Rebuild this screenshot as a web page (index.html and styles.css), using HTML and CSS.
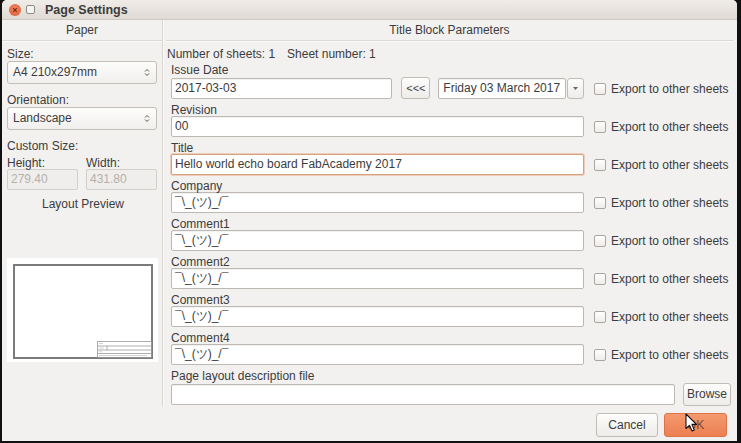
FILE: index.html
```html
<!DOCTYPE html>
<html>
<head>
<meta charset="utf-8">
<link rel="stylesheet" href="styles.css">
</head>
<body>
<div class="window">
  <div class="titlebar">
    <span class="btn-close"><svg width="10" height="10" viewBox="0 0 10 10"><path d="M3.2 3.2 L6.8 6.8 M6.8 3.2 L3.2 6.8" stroke="#7a2a12" stroke-width="1.2"/></svg></span>
    <span class="btn-min"></span>
    <span class="title">Page Settings</span>
  </div>
  <div class="content">
    <div class="left">
      <div class="section-head">Paper</div>
      <div class="lbl l-size">Size:</div>
      <div class="combo">A4 210x297mm<svg class="updown" width="6" height="9" viewBox="0 0 6 9"><path d="M1 3.5 L3 1.5 L5 3.5 M1 5.5 L3 7.5 L5 5.5" fill="none" stroke="#555" stroke-width="1"/></svg></div>
      <div class="lbl l-orient">Orientation:</div>
      <div class="combo">Landscape<svg class="updown" width="6" height="9" viewBox="0 0 6 9"><path d="M1 3.5 L3 1.5 L5 3.5 M1 5.5 L3 7.5 L5 5.5" fill="none" stroke="#555" stroke-width="1"/></svg></div>
      <div class="lbl l-custom">Custom Size:</div>
      <div class="custom-grid">
        <div class="cg-col">
          <div class="lbl">Height:</div>
          <div class="input disabled">279.40</div>
        </div>
        <div class="cg-col">
          <div class="lbl">Width:</div>
          <div class="input disabled">431.80</div>
        </div>
      </div>
      <div class="preview-title">Layout Preview</div>
      <div class="preview">
        <svg width="151" height="104" viewBox="0 0 151 104">
          <rect x="7" y="7" width="138" height="93" fill="#fff" stroke="#7b7b7b" stroke-width="2"/>
          <g stroke="#9a9a9a" stroke-width="0.8" fill="none">
            <rect x="90.5" y="83.5" width="54" height="16"/>
            <line x1="90.5" y1="88" x2="144.5" y2="88"/>
            <line x1="90.5" y1="92" x2="144.5" y2="92"/>
            <line x1="90.5" y1="95.5" x2="144.5" y2="95.5"/>
            <line x1="100" y1="88" x2="100" y2="92"/>
          </g>
          <g stroke="#b8b8b8" stroke-width="0.6">
            <line x1="92" y1="85.5" x2="96" y2="85.5"/>
            <line x1="92" y1="90" x2="97" y2="90"/>
            <line x1="92" y1="93.8" x2="95" y2="93.8"/>
            <line x1="92" y1="97.5" x2="140" y2="97.5"/>
          </g>
        </svg>
      </div>
    </div>
    <div class="right">
      <div class="section-head">Title Block Parameters</div>
      <div class="sheets">Number of sheets: 1<span class="sp"></span>Sheet number: 1</div>
      <div class="fields">
        <div class="row row-date">
          <div class="main">
            <div class="lbl">Issue Date</div>
            <div class="date-line">
              <div class="input date-in">2017-03-03</div>
              <div class="button back">&lt;&lt;&lt;</div>
              <div class="input date-combo">Friday 03 March 2017</div>
              <div class="button drop"><svg width="7" height="5" viewBox="0 0 7 5"><path d="M1 1 L6 1 L3.5 4 Z" fill="#666"/></svg></div>
            </div>
          </div>
          <label class="export"><span class="check"></span>Export to other sheets</label>
        </div>
        <div class="row">
          <div class="main"><div class="lbl">Revision</div><div class="input">00</div></div>
          <label class="export"><span class="check"></span>Export to other sheets</label>
        </div>
        <div class="row">
          <div class="main"><div class="lbl">Title</div><div class="input focus">Hello world echo board FabAcademy 2017</div></div>
          <label class="export"><span class="check"></span>Export to other sheets</label>
        </div>
        <div class="row">
          <div class="main"><div class="lbl">Company</div><div class="input">¯\_(ツ)_/¯</div></div>
          <label class="export"><span class="check"></span>Export to other sheets</label>
        </div>
        <div class="row">
          <div class="main"><div class="lbl">Comment1</div><div class="input">¯\_(ツ)_/¯</div></div>
          <label class="export"><span class="check"></span>Export to other sheets</label>
        </div>
        <div class="row">
          <div class="main"><div class="lbl">Comment2</div><div class="input">¯\_(ツ)_/¯</div></div>
          <label class="export"><span class="check"></span>Export to other sheets</label>
        </div>
        <div class="row">
          <div class="main"><div class="lbl">Comment3</div><div class="input">¯\_(ツ)_/¯</div></div>
          <label class="export"><span class="check"></span>Export to other sheets</label>
        </div>
        <div class="row">
          <div class="main"><div class="lbl">Comment4</div><div class="input">¯\_(ツ)_/¯</div></div>
          <label class="export"><span class="check"></span>Export to other sheets</label>
        </div>
        <div class="row-file">
          <div class="lbl">Page layout description file</div>
          <div class="file-line">
            <div class="input file-in"></div>
            <div class="button browse">Browse</div>
          </div>
        </div>
      </div>
    </div>
  </div>
  <div class="footer">
    <div class="button cancel">Cancel</div>
    <div class="button ok">OK</div>
  </div>
  <svg class="cursor" width="13" height="20" viewBox="0 0 13 20"><path d="M1 1 L1 15.5 L4.5 12.3 L7 18 L9.3 17 L6.9 11.4 L11.5 11.4 Z" fill="#fff" stroke="#111" stroke-width="1.1" stroke-linejoin="round"/></svg>
</div>
</body>
</html>
```

FILE: styles.css
```css
* { box-sizing: border-box; }
html, body { margin: 0; padding: 0; }
body {
  background: #111;
  width: 741px;
  height: 443px;
  overflow: hidden;
  font-family: "Liberation Sans", "DejaVu Sans", sans-serif;
  font-size: 12px;
  color: #3c3c3c;
}
.window {
  position: relative;
  margin-left: 2px;
  width: 735px;
  height: 441px;
  background: #f2f1f0;
  border-radius: 5px 5px 0 0;
  overflow: hidden;
}
.titlebar {
  height: 20px;
  background: linear-gradient(#f0ece8, #dfdad3);
  border-bottom: 1px solid #cdc8c0;
  display: flex;
  align-items: center;
  padding-left: 7px;
}
.btn-close {
  width: 12px;
  height: 12px;
  border-radius: 50%;
  background: radial-gradient(circle at 50% 40%, #f3855f, #d95a35);
  display: flex;
  align-items: center;
  justify-content: center;
}
.btn-min {
  width: 9px;
  height: 9px;
  margin-left: 5px;
  border: 1px solid #8e8a85;
  border-radius: 2px;
  background: #f6f4f1;
}
.title {
  margin-left: 10px;
  font-weight: bold;
  font-size: 12.5px;
  color: #3c3c3c;
}
.content {
  display: flex;
  height: 387px;
}
.left {
  width: 161px;
  padding: 0 3px 0 5px;
  border-right: 1px solid #d9d6d1;
  box-shadow: 1px 0 0 #fbfaf9;
  display: flex;
  flex-direction: column;
}
.section-head {
  height: 21px;
  line-height: 20px;
  text-align: center;
  border-bottom: 1px solid #dcd9d4;
  box-shadow: 0 1px 0 #fbfaf9;
}
.left .section-head { margin-left: -5px; margin-right: -3px; }
.lbl {
  height: 14px;
  line-height: 14px;
  padding-top: 1px;
  white-space: nowrap;
}
.l-size { margin-top: 5px; }
.l-orient { margin-top: 8px; }
.l-custom { margin-top: 8px; }
.combo {
  position: relative;
  height: 23px;
  line-height: 21px;
  padding-left: 5px;
  border: 1px solid #c3beb7;
  border-radius: 3px;
  background: linear-gradient(#fdfdfc, #f1efed);
  margin-top: 1px;
  width: 150px;
}
.updown {
  position: absolute;
  right: 6px;
  top: 6px;
}
.custom-grid {
  display: flex;
  gap: 8px;
  margin-top: 3px;
}
.cg-col { width: 71px; }
.input {
  height: 21px;
  line-height: 19px;
  padding-left: 3px;
  background: #fff;
  border: 1px solid #bdb8b1;
  border-radius: 2px;
  box-shadow: inset 0 1px 1px rgba(0,0,0,0.06);
  white-space: nowrap;
  overflow: hidden;
}
.input.disabled {
  background: #efeeec;
  border-color: #d3cfca;
  color: #b4b0aa;
  box-shadow: none;
}
.preview-title {
  margin-top: 7px;
  text-align: center;
  height: 14px;
  line-height: 14px;
}
.preview {
  margin-top: 47px;
  width: 151px;
  height: 104px;
  background: #fff;
}
.preview svg { display: block; }
.right {
  flex: 1;
  padding-left: 3px;
  padding-right: 4px;
  display: flex;
  flex-direction: column;
}
.sheets {
  margin-top: 6px;
  padding-left: 1px;
  height: 14px;
  line-height: 14px;
}
.sp { display: inline-block; width: 12px; }
.fields {
  padding-left: 5px;
  margin-top: 1px;
}
.row {
  display: flex;
  align-items: flex-end;
  height: 35px;
  margin-bottom: 3px;
}
.row-date { height: 37px; margin-bottom: 3px; }
.main { width: 413px; }
.date-line {
  display: flex;
  align-items: center;
  margin-top: 1px;
}
.date-in { width: 222px; }
.button {
  height: 22px;
  line-height: 20px;
  border: 1px solid #c1bcb5;
  border-radius: 3px;
  background: linear-gradient(#fdfdfc, #eeece9);
  text-align: center;
  white-space: nowrap;
}
.back {
  width: 29px;
  margin-left: 9px;
  font-size: 11px;
}
.date-combo {
  width: 128px;
  margin-left: 8px;
  padding-left: 4px;
  line-height: 19px;
}
.drop {
  width: 17px;
  height: 21px;
  margin-left: 1px;
  display: flex;
  align-items: center;
  justify-content: center;
}
.input.focus {
  border-color: #d7a07f;
  box-shadow: 0 0 0 1px rgba(230,140,95,0.35);
}
.export {
  display: flex;
  align-items: center;
  height: 21px;
  margin-left: 10px;
  white-space: nowrap;
}
.check {
  width: 12px;
  height: 12px;
  border: 1px solid #aaa59e;
  border-radius: 2px;
  background: linear-gradient(#fefefe, #efedeb);
  margin-right: 5px;
}
.file-line {
  display: flex;
  align-items: center;
  margin-top: 1px;
}
.file-in { width: 504px; }
.browse {
  width: 48px;
  height: 23px;
  margin-left: 8px;
  line-height: 21px;
}
.footer {
  display: flex;
  justify-content: flex-end;
  gap: 6px;
  padding-right: 10px;
  padding-top: 6px;
}
.cancel, .ok {
  width: 62px;
  height: 24px;
  line-height: 22px;
}
.ok {
  background: linear-gradient(#f49a6f, #ec7f52);
  border-color: #dc7349;
  color: #7a4634;
  width: 63px;
}
.cursor {
  position: absolute;
  left: 683px;
  top: 413px;
}
```
